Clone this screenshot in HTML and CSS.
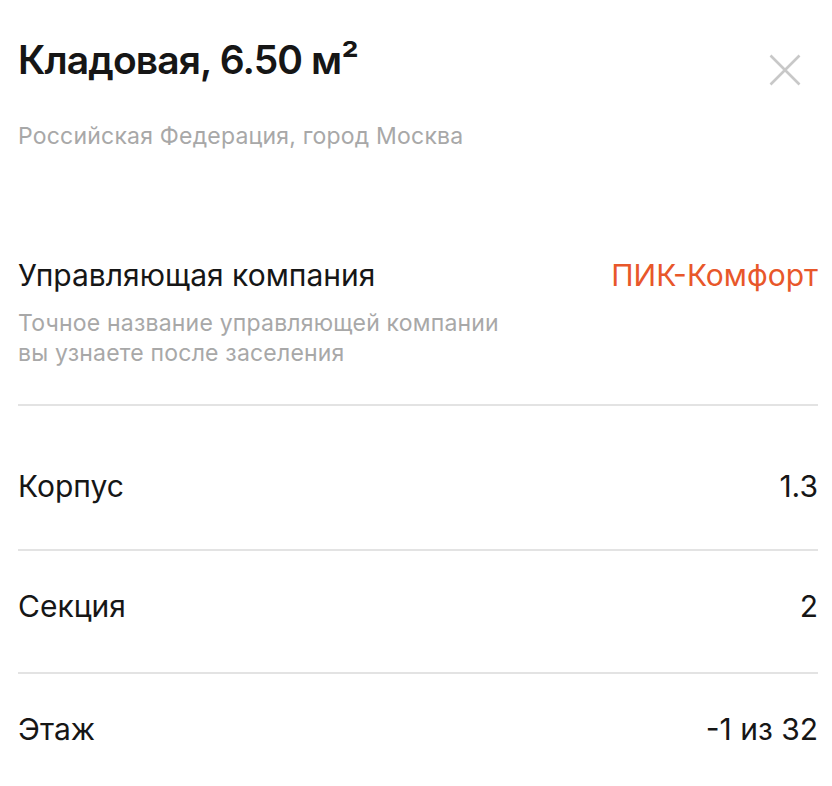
FILE: index.html
```html
<!DOCTYPE html>
<html lang="ru">
<head>
  <meta charset="UTF-8">
  <meta name="viewport" content="width=device-width, initial-scale=1.0">
  <title>Кладовая, 6.50 м²</title>
  <link rel="stylesheet" href="styles.css">
</head>
<body>
  <div class="sheet">
    <header class="sheet-head">
      <div>
        <h1 class="title">Кладовая, 6.50 м²</h1>
        <p class="address">Российская Федерация, город Москва</p>
      </div>
      <button type="button" class="close" aria-label="Закрыть">
        <svg width="32" height="32" viewBox="0 0 32 32">
          <path d="M1.5 1.5 L30.5 30.5 M30.5 1.5 L1.5 30.5" stroke="#c8c8c8" stroke-width="2.6" fill="none"/>
        </svg>
      </button>
    </header>

    <section class="company">
      <div class="company-line">
        <span>Управляющая компания</span>
        <a class="accent" href="#">ПИК-Комфорт</a>
      </div>
      <p class="hint">Точное название управляющей компании<br>вы узнаете после заселения</p>
    </section>

    <ul class="params">
      <li class="param first"><span>Корпус</span><span>1.3</span></li>
      <li class="param"><span>Секция</span><span>2</span></li>
      <li class="param"><span>Этаж</span><span>-1 из 32</span></li>
    </ul>
  </div>
</body>
</html>
```

FILE: styles.css
```css
body {
  margin: 0;
  background: #fff;
  font-family: Inter, "Noto Sans", sans-serif;
  color: #161616;
}
.sheet {
  padding: 0 14px 0 18px;
}
.sheet-head {
  display: flex;
  justify-content: space-between;
  align-items: flex-start;
  padding-top: 36px;
}
.title {
  margin: 0;
  font-size: 39px;
  line-height: 48px;
  font-weight: 600;
  letter-spacing: -0.9px;
}
.address {
  margin: 37px 0 0;
  font-size: 23px;
  line-height: 30px;
  letter-spacing: 0.2px;
  color: #a8a8a8;
}
.close {
  margin-top: 18px;
  margin-right: 17px;
  padding: 0;
  border: none;
  background: none;
  cursor: pointer;
}
.company {
  padding: 104px 0 36px;
  border-bottom: 2px solid #e3e3e3;
}
.company-line {
  display: flex;
  justify-content: space-between;
  font-size: 30px;
  line-height: 40px;
}
.accent {
  color: #e8572a;
  text-decoration: none;
}
.hint {
  margin: 13px 0 0;
  font-size: 23px;
  line-height: 30px;
  letter-spacing: 0.2px;
  color: #a8a8a8;
}
.params {
  list-style: none;
  margin: 0;
  padding: 0;
}
.param {
  display: flex;
  justify-content: space-between;
  padding: 35px 0 46px;
  font-size: 30px;
  line-height: 40px;
  border-bottom: 2px solid #e3e3e3;
}
.param.first {
  padding-top: 60px;
  padding-bottom: 43px;
}
.param:last-child {
  border-bottom: none;
}
```
